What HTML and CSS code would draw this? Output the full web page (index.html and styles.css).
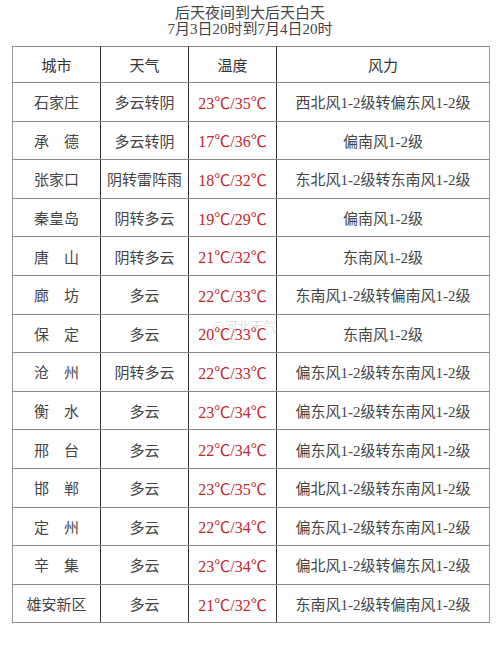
FILE: index.html
```html
<!DOCTYPE html>
<html lang="zh">
<head>
<meta charset="utf-8">
<link rel="stylesheet" href="styles.css">
</head>
<body>
<div class="page">
  <div class="title">
    <div>后天夜间到大后天白天</div>
    <div>7月3日20时到7月4日20时</div>
  </div>
  <div class="wrap">
    <table class="wx">
      <thead>
        <tr><th class="c1">城市</th><th class="c2">天气</th><th class="c3">温度</th><th class="c4">风力</th></tr>
      </thead>
      <tbody>
        <tr><td>石家庄</td><td>多云转阴</td><td class="t">23℃/35℃</td><td>西北风1-2级转偏东风1-2级</td></tr>
        <tr><td>承　德</td><td>多云转阴</td><td class="t">17℃/36℃</td><td>偏南风1-2级</td></tr>
        <tr><td>张家口</td><td>阴转雷阵雨</td><td class="t">18℃/32℃</td><td>东北风1-2级转东南风1-2级</td></tr>
        <tr><td>秦皇岛</td><td>阴转多云</td><td class="t">19℃/29℃</td><td>偏南风1-2级</td></tr>
        <tr><td>唐　山</td><td>阴转多云</td><td class="t">21℃/32℃</td><td>东南风1-2级</td></tr>
        <tr><td>廊　坊</td><td>多云</td><td class="t">22℃/33℃</td><td>东南风1-2级转偏南风1-2级</td></tr>
        <tr><td>保　定</td><td>多云</td><td class="t">20℃/33℃</td><td>东南风1-2级</td></tr>
        <tr><td>沧　州</td><td>阴转多云</td><td class="t">22℃/33℃</td><td>偏东风1-2级转东南风1-2级</td></tr>
        <tr><td>衡　水</td><td>多云</td><td class="t">23℃/34℃</td><td>偏东风1-2级转东南风1-2级</td></tr>
        <tr><td>邢　台</td><td>多云</td><td class="t">22℃/34℃</td><td>偏东风1-2级转东南风1-2级</td></tr>
        <tr><td>邯　郸</td><td>多云</td><td class="t">23℃/35℃</td><td>偏北风1-2级转东南风1-2级</td></tr>
        <tr><td>定　州</td><td>多云</td><td class="t">22℃/34℃</td><td>偏东风1-2级转东南风1-2级</td></tr>
        <tr><td>辛　集</td><td>多云</td><td class="t">23℃/34℃</td><td>偏北风1-2级转偏东风1-2级</td></tr>
        <tr><td>雄安新区</td><td>多云</td><td class="t">21℃/32℃</td><td>东南风1-2级转偏南风1-2级</td></tr>
      </tbody>
    </table>
    <div class="watermark">@河北天气</div>
  </div>
</div>
</body>
</html>
```
FILE: styles.css
```css
html, body {
  margin: 0;
  padding: 0;
  background: #fff;
}
body {
  font-family: "Liberation Serif", "Noto Sans CJK SC", serif;
  color: #444;
}
.page {
  width: 500px;
  height: 646px;
}
.title {
  padding-top: 5px;
  text-align: center;
  font-size: 15px;
  line-height: 16px;
  color: #444;
}
.wrap {
  position: relative;
  margin: 9px 10px 0 12px;
}
.wx {
  width: 478px;
  border-collapse: collapse;
  table-layout: fixed;
  font-size: 15px;
}
.wx th, .wx td {
  text-align: center;
  border-top: 1px solid #8a8a8a;
  border-bottom: 1px solid #8a8a8a;
  border-left: 1px solid #333;
  border-right: 1px solid #333;
  padding: 0;
}
.wx tr > :first-child { border-left-color: #999; }
.wx tr > :last-child { border-right-color: #999; }
.wx th {
  height: 35px;
  font-weight: normal;
  color: #333;
}
.wx td {
  height: 37.6px;
}
.c1 { width: 87px; }
.c2 { width: 87px; }
.c3 { width: 87px; }
.wx td.t {
  color: #c1272d;
  font-size: 16px;
}
.watermark {
  position: absolute;
  left: 200px;
  top: 270px;
  font-family: "Noto Sans CJK SC", sans-serif;
  font-size: 13px;
  color: rgba(160, 160, 160, 0.35);
}
```
